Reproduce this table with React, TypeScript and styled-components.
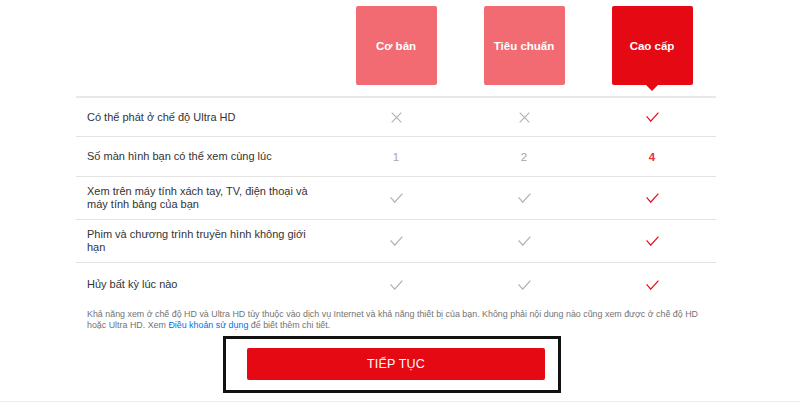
import React from "react";
import styled, { createGlobalStyle } from "styled-components";

const Global = createGlobalStyle`
  html, body { margin: 0; padding: 0; background: #fff; }
  body { font-family: "Liberation Sans", Arial, sans-serif; color: #333; }
  * { box-sizing: border-box; }
`;

const Page = styled.div`
  width: 800px;
  height: 402px;
  overflow: hidden;
  display: flex;
  flex-direction: column;
  border-bottom: 1px solid #ececec;
`;

const Wrap = styled.div`
  width: 640px;
  margin-left: 76px;
  display: flex;
  flex-direction: column;
`;

const HeaderRow = styled.div`
  display: grid;
  grid-template-columns: 256px 128px 128px 128px;
  padding-top: 6px;
  height: 97px;
`;

const PlanBox = styled.div<{ $active?: boolean }>`
  position: relative;
  width: 81px;
  height: 79px;
  justify-self: center;
  display: flex;
  align-items: center;
  justify-content: center;
  border-radius: 2px;
  background: ${(p) => (p.$active ? "#e50914" : "#f26b73")};
  color: #fff;
  font-weight: 700;
  font-size: 11.5px;
  &::after {
    content: "";
    display: ${(p) => (p.$active ? "block" : "none")};
    position: absolute;
    left: 50%;
    bottom: -6px;
    margin-left: -6px;
    border-left: 6px solid transparent;
    border-right: 6px solid transparent;
    border-top: 6px solid #e50914;
  }
`;

const Row = styled.div<{ $first?: boolean; $last?: boolean }>`
  display: grid;
  grid-template-columns: 256px 128px 128px 128px;
  align-items: center;
  min-height: ${(p) => (p.$last ? 44 : 40)}px;
  padding: 8px 0;
  border-top: ${(p) => (p.$first ? "2px solid #e8e8e8" : "1px solid #e3e3e3")};
  margin-top: ${(p) => (p.$first ? "-1px" : "0")};
`;

const Label = styled.div`
  padding-left: 11px;
  padding-right: 20px;
  font-size: 11px;
  line-height: 13px;
  color: #333;
`;

const Cell = styled.div<{ $active?: boolean }>`
  display: flex;
  justify-content: center;
  align-items: center;
  font-size: 11.5px;
  font-weight: ${(p) => (p.$active ? 600 : 400)};
  color: ${(p) => (p.$active ? "#e8323a" : "#a6a6a6")};
`;

const Note = styled.p`
  margin: 3px 0 0 0;
  padding-left: 11px;
  padding-right: 13px;
  font-size: 8.9px;
  line-height: 11px;
  color: #737373;
`;

const Link = styled.a`
  color: #0071eb;
  text-decoration: none;
`;

const Frame = styled.div`
  margin-top: 5px;
  margin-left: 147px;
  width: 338px;
  height: 57px;
  border: 3px solid #111;
  padding: 9px 13px 10px 21px;
  display: flex;
`;

const Button = styled.button`
  flex: 1;
  border: none;
  border-radius: 2px;
  background: #e50914;
  color: #fff;
  font-family: "Liberation Sans", Arial, sans-serif;
  font-size: 12.5px;
  font-weight: 400;
  letter-spacing: 0.2px;
  cursor: pointer;
`;

const Check = ({ active }: { active?: boolean }) => (
  <svg width="13" height="10" viewBox="0 0 13 10" fill="none">
    <path d="M0.6 4.4 L4.7 9.2 L12.4 0.6" stroke={active ? "#e50914" : "#b0b0b0"} strokeWidth="1.2" />
  </svg>
);

const Cross = () => (
  <svg width="11" height="11" viewBox="0 0 11 11" fill="none">
    <path d="M0.7 0.7 L10.3 10.3 M10.3 0.7 L0.7 10.3" stroke="#b0b0b0" strokeWidth="1.1" />
  </svg>
);

type V = "x" | "c" | string;
const rows: { label: string; vals: V[] }[] = [
  { label: "Có thể phát ở chế độ Ultra HD", vals: ["x", "x", "c"] },
  { label: "Số màn hình bạn có thể xem cùng lúc", vals: ["1", "2", "4"] },
  { label: "Xem trên máy tính xách tay, TV, điện thoại và máy tính bảng của bạn", vals: ["c", "c", "c"] },
  { label: "Phim và chương trình truyền hình không giới hạn", vals: ["c", "c", "c"] },
  { label: "Hủy bất kỳ lúc nào", vals: ["c", "c", "c"] },
];

export default function App() {
  return (
    <>
      <Global />
      <Page>
        <Wrap>
          <HeaderRow>
            <div />
            <PlanBox>Cơ bản</PlanBox>
            <PlanBox>Tiêu chuẩn</PlanBox>
            <PlanBox $active>Cao cấp</PlanBox>
          </HeaderRow>
          {rows.map((r, i) => (
            <Row key={i} $first={i === 0} $last={i === rows.length - 1}>
              <Label>{r.label}</Label>
              {r.vals.map((v, j) => (
                <Cell key={j} $active={j === 2}>
                  {v === "x" ? <Cross /> : v === "c" ? <Check active={j === 2} /> : v}
                </Cell>
              ))}
            </Row>
          ))}
          <Note>
            Khả năng xem ở chế độ HD và Ultra HD tùy thuộc vào dịch vụ Internet và khả năng thiết bị của bạn. Không phải nội dung nào cũng xem được ở chế độ HD hoặc Ultra HD. Xem <Link href="#">Điều khoản sử dụng</Link> để biết thêm chi tiết.
          </Note>
          <Frame>
            <Button>TIẾP TỤC</Button>
          </Frame>
        </Wrap>
      </Page>
    </>
  );
}
